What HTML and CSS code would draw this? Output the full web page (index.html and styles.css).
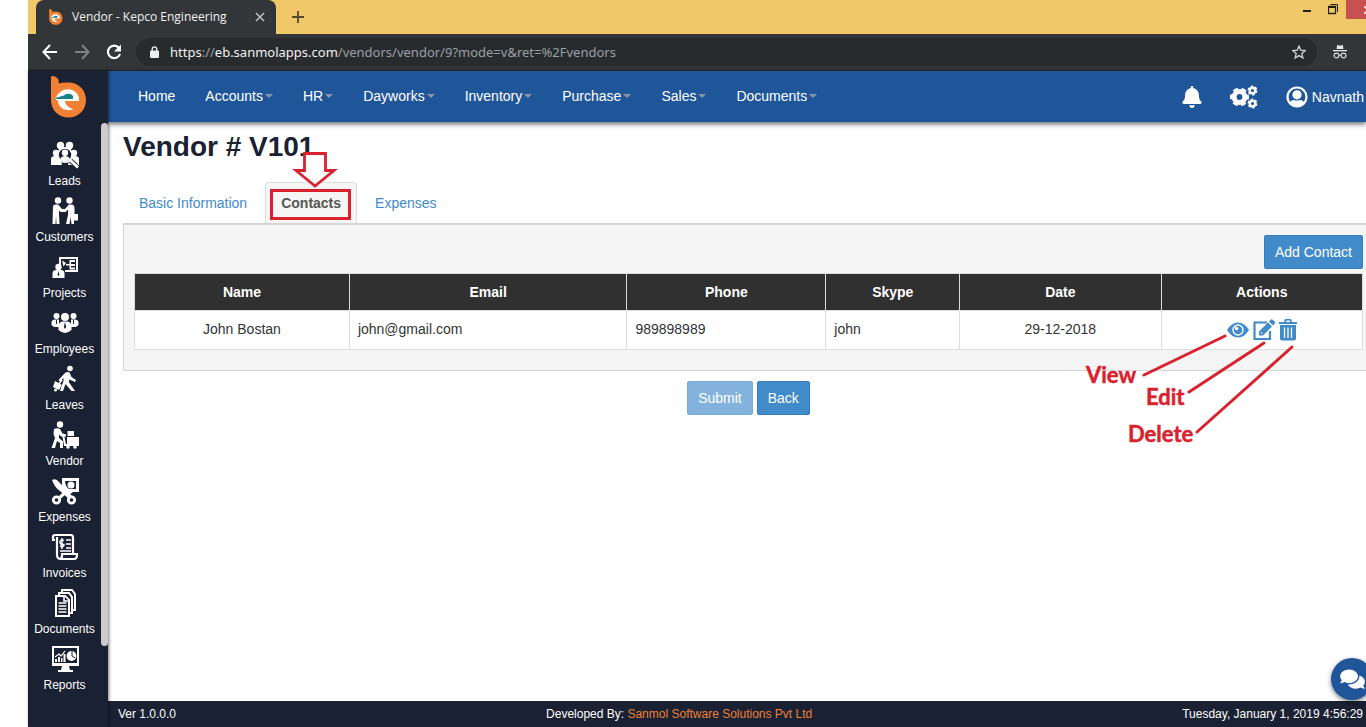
FILE: index.html
```
<!DOCTYPE html>
<html lang="en">
<head>
<meta charset="utf-8">
<title>Vendor - Kepco Engineering</title>
<link rel="stylesheet" href="styles.css">
</head>
<body>
<svg class="defs" aria-hidden="true">
  <symbol id="logo" viewBox="0 0 36 42">
    <path fill="#f08034" d="M0 1Q0 0 1 0Q8 0 8 7.500Q12.500 6 17.500 6.500C27.500 6.500 35 14 35 24S27.500 41.500 17.500 41.500S0 34 0 24Z"/>
    <path fill="#fff" d="M5 21.500C8 15.500 13 12.500 19 13.500C25 14.500 28.500 19 28 25H14C14.500 29.500 18 31.500 22.500 33.500C14 36 7.500 31.500 7 25L4 22.500Z"/>
    <path fill="#128389" d="M4 22L13 19.500C15 17 20 17 22 20V23H6Z"/>
  </symbol>
</svg>
<div class="browser">
  <header class="tabstrip">
    <div class="browser-tab">
      <svg class="favicon"><use href="#logo"/></svg>
      <span class="browser-tab-title">Vendor - Kepco Engineering</span>
      <button class="chrome-btn" aria-label="Close tab"><svg width="10" height="10" viewBox="0 0 10 10"><path d="M1 1L9 9M9 1L1 9" stroke="#bfc2c5" stroke-width="1.500"/></svg></button>
    </div>
    <button class="chrome-btn new-tab" aria-label="New tab"><svg width="12" height="12" viewBox="0 0 12 12"><path d="M6 0V12M0 6H12" stroke="#54492c" stroke-width="1.800"/></svg></button>
    <div class="window-buttons">
      <button class="chrome-btn win" aria-label="Minimize"><svg width="10" height="14" viewBox="0 0 10 14"><path d="M1 9H9" stroke="#282014" stroke-width="2"/></svg></button>
      <button class="chrome-btn win" aria-label="Restore"><svg width="10" height="14" viewBox="0 0 10 14" fill="none" stroke="#282014"><path d="M.5 4.500H7.500V11.500H.5Z" stroke-width="1.300"/><path d="M0 5H8" stroke-width="2"/><path d="M2.500 2.500H9.500V10"/></svg></button>
      <button class="chrome-btn win-close" aria-label="Close"><svg width="8" height="8" viewBox="0 0 8 8"><path d="M0 0L8 8M8 0L0 8" stroke="#fff" stroke-width="1.500"/></svg></button>
    </div>
  </header>
  <div class="toolbar">
    <button class="chrome-btn" aria-label="Back"><svg width="16" height="16" viewBox="0 0 16 16" fill="none" stroke="#fff" stroke-width="2"><path d="M15 8H2M8 1L1.500 8L8 15"/></svg></button>
    <button class="chrome-btn" aria-label="Forward"><svg width="16" height="16" viewBox="0 0 16 16" fill="none" stroke="#7f8386" stroke-width="2"><path d="M1 8H14M8 1L14.500 8L8 15"/></svg></button>
    <button class="chrome-btn" aria-label="Reload"><svg width="16" height="16" viewBox="0 0 16 16"><path d="M13 4A6.200 6.200 0 1 0 14 10" fill="none" stroke="#fff" stroke-width="2.200"/><path d="M15 .5V7.500H8Z" fill="#fff"/></svg></button>
    <div class="address">
      <svg width="10" height="12" viewBox="0 0 10 12"><rect y="4.500" width="9" height="7.500" rx="1" fill="#eee"/><path d="M2.200 5V3.200a2.300 2.300 0 0 1 4.600 0V5" fill="none" stroke="#eee" stroke-width="1.300"/></svg>
      <span class="url"><span class="url-host">https</span>://<span class="url-host">eb.sanmolapps.com</span>/vendors/vendor/9?mode=v&amp;ret=%2Fvendors</span>
      <button class="chrome-btn" aria-label="Bookmark"><svg width="14" height="14" viewBox="0 0 14 14"><path d="M7 1L8.700 5.200L13.300 5.600L9.800 8.600L10.900 13L7 10.600L3.100 13L4.200 8.600L.7 5.600L5.300 5.200Z" fill="none" stroke="#d2d4d5" stroke-width="1.300"/></svg></button>
    </div>
    <svg width="14" height="16" viewBox="0 0 14 16"><path d="M3.500 5L4.200 1L7 1.800L9.800 1L10.500 5ZM0 6H14V7.200H0Z" fill="#e8e8e8"/><g fill="none" stroke="#d8d8d8" stroke-width="1.200"><circle cx="3.500" cy="11.500" r="2.400"/><circle cx="10.500" cy="11.500" r="2.400"/><path d="M5.900 11.200H8.100"/></g></svg>
  </div>

  <div class="app">
    <aside class="sidebar">
      <a class="brand" href="#" aria-label="Home"><svg class="brand-logo"><use href="#logo"/></svg></a>
      <div class="sidebar-body">
        <nav class="side-nav" aria-label="Modules">
          <a href="#"><svg class="side-icon" viewBox="0 0 28 28"><g fill="#fff"><circle cx="9.500" cy="4.500" r="3.700"/><circle cx="18.500" cy="4.500" r="3.700"/><circle cx="5" cy="12" r="3.200"/><circle cx="23" cy="12" r="3.200"/><path d="M0 24V18Q0 15 4 15H9L11 24ZM17 24L19 15H24Q28 15 28 18V24Z"/><circle cx="14" cy="14" r="8"/></g><circle cx="14" cy="14" r="6.200" fill="#1a2133"/><circle cx="14" cy="11.700" r="3.200" fill="#fff"/><path d="M9 18.500Q10 15 14 15T19 18.500Q14 22 9 18.500Z" fill="#fff"/><path d="M19.500 19.500L25.500 25" stroke="#1a2133" stroke-width="4.500"/><path d="M19 19L27 26.500" stroke="#fff" stroke-width="3"/></svg>Leads</a>
          <a href="#"><svg class="side-icon" viewBox="0 0 28 28"><g fill="#fff"><circle cx="7" cy="3.500" r="3.200"/><circle cx="18.500" cy="3.500" r="3.200"/><path d="M2 9.500Q2 7.500 4.500 7.500H7L11 12H14L18 7.500H21Q23.500 8 23.500 11V17H27V23.500H23V27H20.500L19.500 20L18.500 27H15L17 18V12.500L14.500 15H9.500L8 13.500V17L8.500 27H5.500L5 19L4.500 27H1.500Z"/></g></svg>Customers</a>
          <a href="#"><svg class="side-icon" viewBox="0 0 28 28"><path d="M9 12V5H26V18H14" fill="none" stroke="#fff" stroke-width="2"/><g fill="#fff"><circle cx="7.500" cy="14" r="3.200"/><path d="M1.500 25V20Q2 17 5 17H10Q13 17 13.500 20V25ZM11 7.500L15 10L12.500 13.500ZM15 11H19V12.500H15ZM18.500 7H20V16.500H18.500ZM20 7H24V9H20ZM20 11H24V13H20ZM20 14.500H24V16.500H20Z"/></g><path d="M7.500 18L8.500 22L7.500 23L6.500 22Z" fill="#1a2133"/></svg>Projects</a>
          <a href="#"><svg class="side-icon" viewBox="0 0 28 28"><g fill="#fff"><circle cx="5.500" cy="7" r="3"/><circle cx="22.500" cy="7" r="3"/><circle cx="14" cy="8" r="4"/><path d="M.5 16V13Q1 10.500 4 10.500H8V18H3ZM20 10.500H24Q27 10.500 27.500 13V16L25 18H20ZM7.500 21V17Q8 12.500 12 12.500H16Q20 12.500 20.500 17V21Q17 24 14 24T7.500 21Z"/></g><path d="M14 13L15.200 18L14 20L12.800 18ZM5 11H6V15H5ZM22 11H23V15H22Z" fill="#1a2133"/></svg>Employees</a>
          <a href="#"><svg class="side-icon" viewBox="0 0 28 28"><g fill="#fff"><circle cx="19" cy="3.500" r="2.800"/><path d="M13 9Q15.500 6 18.500 7.500L20.500 12L25 15L24 17L18.500 14.500L17.800 17L24 26H20.500L14.500 19L12 26H9L12.500 16V13L9 16.500L7.500 15Z"/><path d="M4 16L11 20L8 25L2 22Z"/><circle cx="4.500" cy="25" r="1.500"/></g><path d="M7 20L11 15" stroke="#fff" stroke-width="1.500"/></svg>Leaves</a>
          <a href="#"><svg class="side-icon" viewBox="0 0 28 28"><g fill="#fff"><circle cx="9" cy="3.500" r="3.200"/><path d="M3 8Q6 6.500 9 8L11.500 12.500L15 13.500V15.500H10L8 13.500V17L12 20.500V27H9V22L6 20L4 27H.5L4 17L2.500 13ZM16.500 10H23V15H16.500ZM16 16H28V23H16Z"/><circle cx="17" cy="26" r="1.800"/><circle cx="24" cy="26" r="1.800"/></g><path d="M12 13L14 24H28" fill="none" stroke="#fff" stroke-width="2"/></svg>Vendor</a>
          <a href="#"><svg class="side-icon" viewBox="0 0 28 28"><path fill="#fff" fill-rule="evenodd" d="M11 1H28V15H22L18 18L11 10ZM14 4Q14 9 18 12H25V4Z"/><circle cx="20" cy="8" r="3.500" fill="#fff"/><path fill="#fff" d="M1 3Q5 1 8 5L21 19L18 22L9 14Q4 11 1 3Z"/><g stroke="#fff" fill="none" stroke-width="3"><path d="M15 15L8 21"/><circle cx="5.500" cy="23" r="3.200" stroke-width="2.800"/><circle cx="20.500" cy="23" r="3.200" stroke-width="2.800"/></g></svg>Expenses</a>
          <a href="#"><svg class="side-icon" viewBox="0 0 28 28"><g fill="none" stroke="#fff" stroke-width="2.200"><path d="M4 7H2V4Q2 2 4 2H20Q22 2 22 5V20M6 4V22Q6 26 10 26H23Q26 26 26 22V21H11V23Q11 26 8 26"/><path d="M15 7H20M15 11H20M15 15H20M9 18H20" stroke-width="1.700"/><path d="M13 7.500Q9 6 9 9T13 11.500Q13 14.500 9 13M11 5V16" stroke-width="1.500"/></g></svg>Invoices</a>
          <a href="#"><svg class="side-icon" viewBox="0 0 28 28"><g fill="#1a2133" stroke="#fff" stroke-width="2"><path d="M11 1H21L24 5V21H11Z"/><path d="M8 4H18L21 8V24H8Z"/><path d="M5 7H14L18 11V27H5Z"/><path d="M13 7V12H18M7.500 14H15.500M7.500 17H15.500M7.500 20H15.500M7.500 23H15.500" stroke-width="1.600"/></g></svg>Documents</a>
          <a href="#"><svg class="side-icon" viewBox="0 0 28 28"><path fill="#fff" fill-rule="evenodd" d="M1 1H28V21H18L19 25H22V27H7V25H10L11 21H1ZM3 3H26V18H3Z"/><path fill="#fff" d="M4 14H6V17H4ZM7 12H9V17H7ZM10 13H11.500V17H10ZM12.500 9H14.500V17H12.500Z"/><path d="M4 12L8 9L10 11L14 6" fill="none" stroke="#fff" stroke-width="1.200"/><circle cx="20.500" cy="11" r="4.900" fill="#fff"/><path d="M21 6V11L24 13" fill="none" stroke="#1a2133"/></svg>Reports</a>
        </nav>
        <div class="side-scroll"></div>
      </div>
    </aside>

    <div class="workspace">
      <div class="topbar">
        <nav class="menu" aria-label="Main">
          <a href="#">Home</a>
          <a href="#" class="has-caret">Accounts</a>
          <a href="#" class="has-caret">HR</a>
          <a href="#" class="has-caret">Dayworks</a>
          <a href="#" class="has-caret">Inventory</a>
          <a href="#" class="has-caret">Purchase</a>
          <a href="#" class="has-caret">Sales</a>
          <a href="#" class="has-caret">Documents</a>
        </nav>
        <div class="account">
          <button class="icon-btn" aria-label="Notifications"><svg width="20" height="22" viewBox="0 0 448 512"><path fill="#fff" d="M224 512c35.320 0 63.970-28.650 63.970-64H160.030c0 35.350 28.650 64 63.970 64zm215.390-149.710c-19.320-20.760-55.470-51.990-55.470-154.290 0-77.700-54.480-139.900-127.940-155.160V32c0-17.670-14.320-32-31.980-32s-31.980 14.330-31.980 32v20.840C118.560 68.100 64.080 130.300 64.080 208c0 102.300-36.150 133.530-55.470 154.290-6 6.450-8.660 14.160-8.610 21.710.11 16.400 12.980 32 32.100 32h383.800c19.120 0 32-15.600 32.100-32 .05-7.550-2.610-15.270-8.610-21.710z"/></svg></button>
          <button class="icon-btn" aria-label="Settings"><svg width="28" height="24" viewBox="0 0 28 24" fill="none" stroke="#fff"><circle cx="9.500" cy="12" r="5.400" stroke-width="5"/><circle cx="9.500" cy="12" r="8" stroke-width="3" stroke-dasharray="4.800 3.580" stroke-dashoffset="2.400"/><circle cx="22.500" cy="5.500" r="2.800" stroke-width="2.400"/><circle cx="22.500" cy="5.500" r="4" stroke-width="2" stroke-dasharray="2.200 1.990"/><circle cx="22.500" cy="18.500" r="2.800" stroke-width="2.400"/><circle cx="22.500" cy="18.500" r="4" stroke-width="2" stroke-dasharray="2.200 1.990"/></svg></button>
          <a href="#" class="user"><svg width="22" height="22" viewBox="0 0 22 22"><circle cx="11" cy="11" r="9.500" fill="none" stroke="#fff" stroke-width="2.200"/><circle cx="11" cy="8.800" r="4.600" fill="#fff"/><path fill="#fff" d="M3.500 17Q5 14 8 14Q11 15.200 14 14Q17 14 18.500 17Q16 21 11 21T3.500 17Z"/></svg>Navnath</a>
        </div>
      </div>

      <main class="content">
        <h1>Vendor # V101</h1>
        <div class="tabs">
          <a href="#" class="tab">Basic Information</a>
          <a href="#" class="tab active">Contacts
            <span class="highlight-box"></span>
            <svg class="highlight-arrow" width="46" height="38" viewBox="0 0 46 38"><path d="M12.500 1.500H33.500V18.500H42L23 34L4 18.500H12.500Z" fill="#fff" stroke="#d8232e" stroke-width="2.800"/></svg>
          </a>
          <a href="#" class="tab">Expenses</a>
        </div>
        <section class="panel">
          <div class="panel-actions"><button class="btn">Add Contact</button></div>
          <table class="contacts">
            <colgroup><col class="c-name"><col class="c-email"><col class="c-phone"><col class="c-skype"><col class="c-date"><col class="c-actions"></colgroup>
            <thead><tr><th>Name</th><th>Email</th><th>Phone</th><th>Skype</th><th>Date</th><th>Actions</th></tr></thead>
            <tbody><tr>
              <td class="center">John Bostan</td><td>john@gmail.com</td><td>989898989</td><td>john</td><td class="center">29-12-2018</td>
              <td class="center">
                <div class="row-actions">
                  <button class="icon-btn" aria-label="View"><svg width="22" height="22" viewBox="0 0 22 22"><path fill="#428bca" d="M0 11Q4.500 3.500 11 3.500T22 11Q17.500 18.500 11 18.500T0 11Z"/><circle cx="11" cy="11" r="5.700" fill="#fff"/><circle cx="11" cy="11" r="4.300" fill="#428bca"/><circle cx="9.600" cy="9.500" r="1.700" fill="#fff"/></svg></button>
                  <button class="icon-btn" aria-label="Edit"><svg width="22" height="22" viewBox="0 0 22 22"><path d="M14 3.500H1.500V20H17V12" fill="none" stroke="#428bca" stroke-width="2.200"/><path fill="#428bca" d="M6 16.500V12.500L15 3.500L19 7.500L10 16.500ZM16 2.500L18 .5Q19 0 20 1L22 3Q22.500 4 21.500 5L20 6.500Z"/><path d="M7.500 13L9.500 15" stroke="#fff"/></svg></button>
                  <button class="icon-btn" aria-label="Delete"><svg width="18" height="22" viewBox="0 0 18 22"><path fill="#428bca" fill-rule="evenodd" d="M0 3H5L6 0H12L13 3H18V5H0ZM7 3H11V1.500H7.500ZM1 6H17V19.500Q17 21.500 15 21.500H3Q1 21.500 1 19.500Z"/><path d="M5.500 8.500V19M9 8.500V19M12.500 8.500V19" stroke="#fff" stroke-width="1.300"/></svg></button>
                  <svg class="callouts" width="212" height="132" viewBox="0 0 212 132">
                    <g class="callout-lines"><path d="M59 56L140 17M104 73L179 24M112 113L207 28"/></g>
                    <text x="1" y="64">View</text><text x="61" y="86">Edit</text><text x="43" y="123">Delete</text>
                  </svg>
                </div>
              </td>
            </tr></tbody>
          </table>
        </section>
        <div class="form-actions"><button class="btn" disabled>Submit</button><button class="btn">Back</button></div>
      </main>

      <footer class="footer">
        <span>Ver 1.0.0.0</span>
        <span>Developed By: <a href="#">Sanmol Software Solutions Pvt Ltd</a></span>
        <span>Tuesday, January 1, 2019 4:56:29</span>
      </footer>
    </div>
  </div>
</div>
<button class="chat" aria-label="Chat"><svg width="25" height="22" viewBox="0 0 576 512"><path fill="#fff" d="M416 192c0-88.400-93.100-160-208-160S0 103.600 0 192c0 34.300 14.100 65.900 38 92-13.400 30.200-35.500 54.200-35.800 54.500-2.200 2.300-2.800 5.700-1.500 8.700S4.800 352 8 352c36.600 0 66.900-12.300 88.700-25 32.200 15.700 70.300 25 111.300 25 114.900 0 208-71.600 208-160zm122 220c23.900-26 38-57.700 38-92 0-66.900-53.500-124.200-129.300-148.100.9 6.600 1.300 13.300 1.300 20.100 0 105.900-107.700 192-240 192-10.800 0-21.300-.8-31.700-1.900C207.800 439.600 281.800 480 368 480c41 0 79.100-9.200 111.300-25 21.800 12.700 52.100 25 88.700 25 3.200 0 6.100-1.900 7.300-4.800 1.300-2.900.7-6.300-1.500-8.700-.3-.3-22.400-24.200-35.800-54.500z"/></svg></button>
</body>
</html>
```
FILE: styles.css
```
* { box-sizing: border-box; }
body {
  margin: 0;
  background: #fff;
  color: #333;
  font: 14px/20px "Liberation Sans", Arial, sans-serif;
}
a { color: inherit; text-decoration: none; }
button { font: inherit; cursor: pointer; }
svg { display: block; flex: none; }
.defs { position: absolute; width: 0; height: 0; }

.browser {
  display: flex;
  flex-direction: column;
  min-height: 100vh;
  padding-left: 28px;
  overflow: hidden;
}
.chrome-btn, .icon-btn {
  display: flex;
  align-items: center;
  justify-content: center;
  padding: 0;
  border: 0;
  background: none;
}

/* Browser frame */
.tabstrip { display: flex; height: 34px; padding-left: 8px; background: #f0c869; }
.browser-tab {
  display: flex;
  align-items: center;
  width: 240px;
  padding: 0 11px 0 13px;
  border-radius: 8px 8px 0 0;
  background: #323639;
  color: #f1f1f1;
  font: 12px/16px "Open Sans", sans-serif;
}
.favicon { width: 14px; height: 16px; margin-right: 9px; }
.browser-tab-title { flex: 1; white-space: nowrap; }
.new-tab { width: 44px; }
.window-buttons { display: flex; align-items: flex-start; margin-left: auto; }
.win { width: 26px; padding-top: 2px; }
.win-close { justify-content: flex-start; width: 20px; height: 19px; padding-left: 18px; background: #c75050; overflow: hidden; }
.toolbar {
  display: flex;
  align-items: center;
  gap: 16px;
  height: 37px;
  padding: 0 19px 0 14px;
  background: #323639;
  border-bottom: 1px solid #202427;
}
.address {
  display: flex;
  flex: 1;
  align-items: center;
  height: 28px;
  margin-left: -2px;
  padding: 0 11px 0 14px;
  border-radius: 14px;
  background: #282b2e;
}
.url { flex: 1; margin-left: 10px; color: #9aa0a6; font: 13px/20px "Noto Sans", sans-serif; }
.url-host { color: #f1f1f1; }

/* Sidebar */
.app { display: flex; flex: 1; }
.sidebar {
  z-index: 2;
  display: flex;
  flex-direction: column;
  width: 80px;
  background: #1a2133;
  box-shadow: 1px 0 3px rgba(0, 0, 0, .5);
}
.brand { display: flex; justify-content: center; height: 52px; padding: 5px 0 0 2px; }
.brand-logo { width: 36px; height: 42px; }
.sidebar-body { display: flex; flex: 1; align-items: flex-start; }
.side-nav { flex: 1; padding-top: 18px; }
.side-nav a {
  display: flex;
  flex-direction: column;
  align-items: center;
  height: 56px;
  color: #fff;
  font-size: 12px;
  line-height: 16px;
}
.side-icon { width: 28px; height: 28px; margin-bottom: 4px; }
.side-scroll { width: 7px; height: 523px; border-radius: 4px; background: #ccc; }

/* Top bar */
.workspace { display: flex; flex: 1; flex-direction: column; min-width: 0; }
.topbar {
  z-index: 1;
  display: flex;
  align-items: center;
  justify-content: space-between;
  height: 51px;
  padding: 0 2px 0 30px;
  background: #1e5699;
  color: #fff;
  box-shadow: 0 2px 5px rgba(0, 0, 0, .6);
}
.menu { display: flex; gap: 30px; padding-bottom: 2px; }
.has-caret { display: flex; align-items: center; gap: 2px; }
.has-caret::after {
  content: "";
  border: 4px solid transparent;
  border-top-color: #8a94a3;
  border-bottom: 0;
}
.account { display: flex; align-items: center; gap: 28px; }
.user { display: flex; align-items: center; gap: 4px; }

/* Page */
.content { flex: 1; padding: 9px 0 0 15px; overflow: hidden; }
h1 { margin: 0; color: #1a2133; font-size: 28px; line-height: 32px; }
.tabs { display: flex; gap: 2px; margin-top: 19px; }
.tab {
  padding: 10px 15px;
  border: 1px solid transparent;
  border-bottom: 0;
  border-radius: 4px 4px 0 0;
  color: #428bca;
}
.tab.active {
  position: relative;
  border-color: #ddd;
  background: #f5f5f5;
  color: #555;
  font-weight: bold;
}
.highlight-box { position: absolute; inset: 6px 5px 3px 4px; border: 3px solid #d8232e; }
.highlight-arrow { position: absolute; left: 26px; top: -31px; }
.panel {
  margin-right: -8px;
  padding: 10px;
  padding-bottom: 20px;
  border: 1px solid #d5d5d5;
  border-top-width: 2px;
  background: #f5f5f5;
}
.panel-actions { display: flex; justify-content: flex-end; margin-bottom: 4px; }
.btn {
  height: 34px;
  padding: 0 10px;
  border: 1px solid #357ebd;
  border-radius: 2px;
  background: #428bca;
  color: #fff;
}
.btn:disabled { opacity: .65; }
.contacts { width: 100%; border-collapse: collapse; table-layout: fixed; background: #fff; }
.contacts th, .contacts td { padding: 8px; border: 1px solid #ddd; }
.contacts th { background: #303030; color: #fff; }
.contacts td { height: 39px; vertical-align: top; }
.contacts .center { text-align: center; }
.c-name { width: 17.5%; }
.c-email { width: 22.6%; }
.c-phone { width: 16.2%; }
.c-skype { width: 10.9%; }
.c-date { width: 16.4%; }
.c-actions { width: 16.4%; }
.row-actions { position: relative; display: inline-flex; gap: 4px; vertical-align: top; }
.callouts { position: absolute; left: -142px; top: 0; pointer-events: none; }
.callouts text { fill: #d8232e; stroke: #d8232e; stroke-width: .5px; font: bold 22px Lato, sans-serif; }
.callout-lines { fill: none; stroke: #d8232e; stroke-width: 3; stroke-linecap: round; }
.form-actions { display: flex; justify-content: center; gap: 4px; margin: 10px -8px 0 0; }

.footer {
  display: flex;
  align-items: center;
  justify-content: space-between;
  height: 26px;
  padding: 0 3px 0 10px;
  background: #1a2133;
  color: #fff;
  font-size: 12px;
}
.footer a { color: #f08034; }
.chat {
  position: fixed;
  right: -7px;
  bottom: 27px;
  z-index: 3;
  display: flex;
  align-items: center;
  justify-content: center;
  width: 42px;
  height: 42px;
  padding: 0;
  border: 0;
  border-radius: 50%;
  background: #1e5699;
  box-shadow: 0 2px 5px rgba(0, 0, 0, .5);
}
```
